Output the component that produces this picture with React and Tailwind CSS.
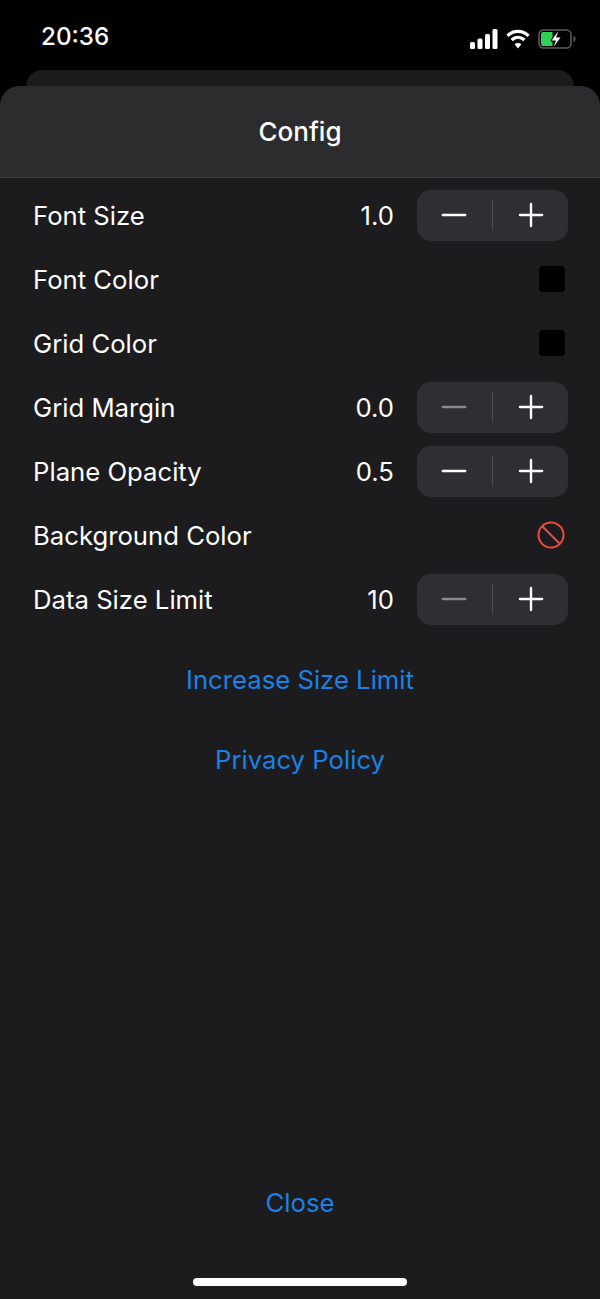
import { Minus, Plus } from 'lucide-react';

const font = 'font-["Inter",sans-serif]';

function Signal() {
  return (
    <svg width="28" height="20" viewBox="0 0 28 20" fill="#fff">
      <rect x="0" y="13" width="5" height="7" rx="1.5" />
      <rect x="7.5" y="9.5" width="5" height="10.5" rx="1.5" />
      <rect x="15" y="5" width="5" height="15" rx="1.5" />
      <rect x="22.5" y="0" width="5" height="20" rx="1.5" />
    </svg>
  );
}

function Wifi() {
  return (
    <svg width="24" height="20" viewBox="0 0 24 20" fill="none" stroke="#fff" strokeWidth="3.2">
      <path d="M1.5 6.8C7.5 .9 16.5 .9 22.5 6.8" />
      <path d="M5.6 11C9.4 7.4 14.6 7.4 18.4 11" />
      <path d="M12 19.5 L8.6 15.2 C10.6 13.5 13.4 13.5 15.4 15.2 Z" fill="#fff" stroke="none" />
    </svg>
  );
}

function Battery() {
  return (
    <svg width="38" height="20" viewBox="0 0 38 20" fill="none">
      <rect x="1" y="1" width="32" height="18" rx="4.5" stroke="#5e5e60" strokeWidth="1.5" />
      <path d="M35.500 7v6c1.200-.4 2-1.600 2-3s-.8-2.600-2-3z" fill="#5e5e60" />
      <path d="M3 5a2 2 0 0 1 2-2h9.500v5l-2 4 2 1v4H5a2 2 0 0 1-2-2z" fill="#30d158" />
      <path d="M20.500 2 13.500 11.500h4.500L15.500 18 22.500 8.500H18z" fill="#fff" />
    </svg>
  );
}

function Stepper({ minusDim }) {
  return (
    <div className="flex h-[51px] w-[151px] items-center rounded-[14px] bg-[#2f2f33]">
      <div className="flex flex-1 justify-center">
        <Minus size={38} strokeWidth={1.6} className={minusDim ? 'text-[#8a8a8d]' : 'text-white'} />
      </div>
      <div className="h-[30px] w-[1.500px] bg-[#4c4c50]" />
      <div className="flex flex-1 justify-center">
        <Plus size={38} strokeWidth={1.5} className="text-white" />
      </div>
    </div>
  );
}

function Row({ label, value, minusDim, swatch, none }) {
  return (
    <div className="flex h-16 items-center pl-[33px] pr-8 text-[25.700px] text-white">
      <span className="flex-1 pt-[2px]">{label}</span>
      {value && <span className="mr-[23px] pt-[2px]">{value}</span>}
      {value && <Stepper minusDim={minusDim} />}
      {swatch && <div className="mr-[3px] h-[26px] w-[26px] rounded-[4px] bg-black" />}
      {none && (
        <svg width="28" height="28" viewBox="0 0 28 28" fill="none" stroke="#ee4b3f" strokeWidth="2" className="mr-[3px]">
          <circle cx="14" cy="14" r="12.500" />
          <path d="M5 5 23 23" />
        </svg>
      )}
    </div>
  );
}

export default function App() {
  return (
    <div className={`flex h-[1299px] w-[600px] flex-col overflow-hidden bg-black ${font}`}>
      <div className="flex h-[70px] items-center justify-between pl-[41px] pr-[24px] pt-[4px]">
        <span className="text-[24.200px] font-medium text-white">20:36</span>
        <div className="flex items-center gap-[8px] pt-[4px]">
          <Signal />
          <Wifi />
          <Battery />
        </div>
      </div>
      <div className="mx-[26px] h-4 rounded-t-[16px] bg-[#1c1c1e]" />
      <div className="flex flex-1 flex-col rounded-t-[20px] bg-[#1c1c1e]">
        <div className="flex h-[92px] items-center justify-center rounded-t-[20px] border-b border-[#3a3a3c] bg-[#2c2c2e] text-[26px] font-medium text-white">
          Config
        </div>
        <div className="pt-[5px]">
          <Row label="Font Size" value="1.0" />
          <Row label="Font Color" swatch />
          <Row label="Grid Color" swatch />
          <Row label="Grid Margin" value="0.0" minusDim />
          <Row label="Plane Opacity" value="0.5" />
          <Row label="Background Color" none />
          <Row label="Data Size Limit" value="10" minusDim />
        </div>
        <div className="flex flex-col items-center gap-12 pt-[33px] text-[25.700px] leading-8 text-[#1a82e6]">
          <span>Increase Size Limit</span>
          <span>Privacy Policy</span>
        </div>
        <div className="mt-auto flex flex-col items-center text-[25.700px] leading-8 text-[#1a82e6]">
          <span>Close</span>
          <div className="mb-[13px] mt-[59px] h-2 w-[214px] rounded-full bg-white" />
        </div>
      </div>
    </div>
  );
}
